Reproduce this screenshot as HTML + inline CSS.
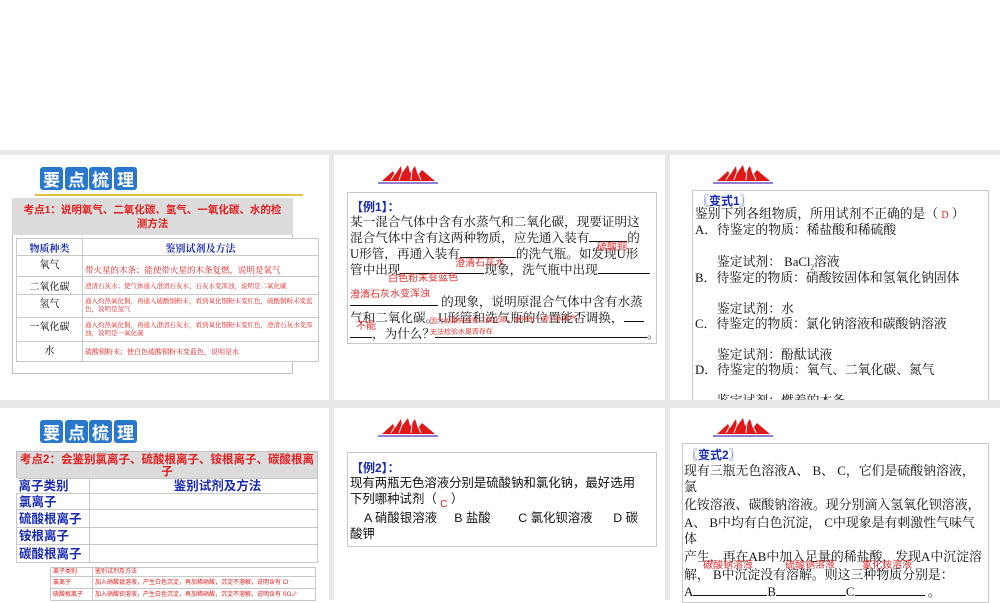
<!DOCTYPE html>
<html><head><meta charset="utf-8">
<style>
*{margin:0;padding:0;box-sizing:border-box}
body{width:1000px;height:600px;position:relative;background:#fff;overflow:hidden;font-family:"Liberation Serif","Noto Serif CJK SC",serif}
.a{position:absolute}
.gray{left:0;top:150px;width:1000px;height:450px;background:#e8e8e8}
.slide{background:#fff}
.blk{position:absolute;width:23px;height:23px;background:#2a78cc;border-radius:3px;color:#fff;font:bold 17px/23px "Noto Sans CJK SC",sans-serif;text-align:center}
.sans{font-family:"Liberation Sans","Noto Sans CJK SC",sans-serif}
.box{border:1px solid #c8c8c8;background:#fff}
.t{font-size:12.6px;line-height:16px;color:#111;white-space:nowrap}
.red{color:#e02020}
.blue{color:#1a2bb0}
table{border-collapse:collapse;position:absolute}
td{border:1px solid #c8c8c8;padding:0 2px}
.ul{display:inline-block;border-bottom:1px solid #111;height:12px;vertical-align:baseline}
.hw{font-family:"Liberation Sans","Noto Sans CJK SC",sans-serif;color:#e03030;font-size:10px;position:absolute;white-space:nowrap;transform:rotate(-1deg)}
</style></head><body>
<div class="a gray"></div>
<div class="a slide" style="left:0;top:155px;width:329px;height:245px"></div>
<div class="a slide" style="left:334px;top:155px;width:331px;height:245px"></div>
<div class="a slide" style="left:670px;top:155px;width:330px;height:245px"></div>
<div class="a slide" style="left:0;top:408px;width:329px;height:192px"></div>
<div class="a slide" style="left:334px;top:408px;width:331px;height:192px"></div>
<div class="a slide" style="left:670px;top:408px;width:330px;height:192px"></div>

<!-- slide 1 -->
<div class="blk" style="left:40px;top:167px">要</div>
<div class="blk" style="left:65px;top:167px">点</div>
<div class="blk" style="left:89px;top:167px">梳</div>
<div class="blk" style="left:114px;top:167px">理</div>
<div class="a" style="left:35px;top:194px;width:268px;height:2px;background:#e8c040"></div>
<div class="a" style="left:12px;top:198px;width:281px;height:176px;border:1px solid #c0c0c0"></div>
<div class="a sans" style="left:12px;top:198px;width:281px;height:37px;background:#dcdcdc;color:#e02020;font-weight:bold;font-size:10.5px;line-height:14px;text-align:center;padding-top:5px;white-space:nowrap">考点1：说明氧气、二氧化碳、氢气、一氧化碳、水的检<br>测方法</div>
<table style="left:16px;top:238px;width:303px;background:#fff;font-size:10px">
<tr style="height:17px"><td style="width:66px;text-align:center;color:#1a2bb0;font-weight:bold">物质种类</td><td style="text-align:center;color:#1a2bb0;font-weight:bold">鉴别试剂及方法</td></tr>
<tr style="height:21px"><td style="text-align:center;vertical-align:top">氧气</td><td class="red" style="font-size:8.5px;vertical-align:bottom">带火星的木条；能使带火星的木条复燃，说明是氧气</td></tr>
<tr style="height:18px"><td style="text-align:center">二氧化碳</td><td class="red" style="font-size:6.5px">澄清石灰水；使气体通入澄清石灰水，石灰水变浑浊，说明是二氧化碳</td></tr>
<tr style="height:23px"><td style="text-align:center;vertical-align:top">氢气</td><td class="red" style="font-size:6.5px;line-height:8px">通入灼热氧化铜，再通入硫酸铜粉末，看到氧化铜粉末变红色，硫酸铜粉末变蓝色，说明是氢气</td></tr>
<tr style="height:24px"><td style="text-align:center;vertical-align:top">一氧化碳</td><td class="red" style="font-size:6.5px;line-height:8px">通入灼热氧化铜，再通入澄清石灰水，看到氧化铜粉末变红色，澄清石灰水变浑浊，说明是一氧化碳</td></tr>
<tr style="height:20px"><td style="text-align:center;vertical-align:top">水</td><td class="red" style="font-size:7px">硫酸铜粉末；使白色硫酸铜粉末变蓝色，说明是水</td></tr>
</table>

<!-- logos -->
<svg class="a" style="left:377px;top:163px" width="62" height="22" viewBox="0 0 62 22"><path d="M5 18 L16 8 L18 12 L24 3 L25 10 L31 2 L33 10 L38 3 L41 12 L45 7 L58 18 Z" fill="#e01818"/><path d="M14 17 L18 10 M22 17 L26 6 M34 17 L35 6 M44 17 L40 8" stroke="#fff" stroke-width="1"/><line x1="1" y1="20" x2="61" y2="20" stroke="#5030b0" stroke-width="1.3"/></svg>
<svg class="a" style="left:712px;top:163px" width="62" height="22" viewBox="0 0 62 22"><path d="M5 18 L16 8 L18 12 L24 3 L25 10 L31 2 L33 10 L38 3 L41 12 L45 7 L58 18 Z" fill="#e01818"/><path d="M14 17 L18 10 M22 17 L26 6 M34 17 L35 6 M44 17 L40 8" stroke="#fff" stroke-width="1"/><line x1="1" y1="20" x2="61" y2="20" stroke="#5030b0" stroke-width="1.3"/></svg>
<svg class="a" style="left:377px;top:416px" width="62" height="22" viewBox="0 0 62 22"><path d="M5 18 L16 8 L18 12 L24 3 L25 10 L31 2 L33 10 L38 3 L41 12 L45 7 L58 18 Z" fill="#e01818"/><path d="M14 17 L18 10 M22 17 L26 6 M34 17 L35 6 M44 17 L40 8" stroke="#fff" stroke-width="1"/><line x1="1" y1="20" x2="61" y2="20" stroke="#5030b0" stroke-width="1.3"/></svg>
<svg class="a" style="left:712px;top:416px" width="62" height="22" viewBox="0 0 62 22"><path d="M5 18 L16 8 L18 12 L24 3 L25 10 L31 2 L33 10 L38 3 L41 12 L45 7 L58 18 Z" fill="#e01818"/><path d="M14 17 L18 10 M22 17 L26 6 M34 17 L35 6 M44 17 L40 8" stroke="#fff" stroke-width="1"/><line x1="1" y1="20" x2="61" y2="20" stroke="#5030b0" stroke-width="1.3"/></svg>

<!-- slide 2 -->
<div class="a box" style="left:347px;top:192px;width:310px;height:152px"></div>
<div class="a sans blue" style="left:351px;top:198px;font-weight:bold;font-size:12px">【例1】：</div>
<div class="a t" style="left:350px;top:214px">某一混合气体中含有水蒸气和二氧化碳，现要证明这</div>
<div class="a t" style="left:350px;top:230px">混合气体中含有这两种物质，应先通入装有<span class="ul" style="width:38px"></span>的</div>
<div class="a t" style="left:350px;top:246px">U形管，再通入装有<span class="ul" style="width:56px"></span>的洗气瓶。如发现U形</div>
<div class="a t" style="left:350px;top:262px">管中出现<span class="ul" style="width:84px"></span>现象，洗气瓶中出现<span class="ul" style="width:52px"></span></div>
<div class="a t" style="left:350px;top:294px"><span class="ul" style="width:88px"></span> 的现象，说明原混合气体中含有水蒸</div>
<div class="a t" style="left:350px;top:310px">气和二氧化碳。U形管和洗气瓶的位置能否调换，<span class="ul" style="width:20px"></span></div>
<div class="a t" style="left:350px;top:326px"><span class="ul" style="width:22px"></span>，为什么？<span class="ul" style="width:212px"></span>。</div>
<div class="hw" style="left:597px;top:238px">硫酸铜</div>
<div class="hw" style="left:455px;top:254px">澄清石灰水</div>
<div class="hw" style="left:388px;top:269px">白色粉末变蓝色</div>
<div class="hw" style="left:350px;top:285px">澄清石灰水变浑浊</div>
<div class="hw" style="left:356px;top:317px">不能</div>
<div class="hw" style="left:430px;top:315px;font-size:7px">因为如果先检验二氧化碳，会带出一部分水蒸气，</div>
<div class="hw" style="left:430px;top:327px;font-size:7px">无法检验水是否存在</div>

<!-- slide 3 -->
<div class="a box" style="left:692px;top:190px;width:297px;height:215px"></div>
<div class="a sans blue" style="left:697px;top:192px;font-weight:bold;font-size:12px">〖变式1〗</div>
<div class="a t" style="left:695px;top:206px;font-size:12.8px">鉴别下列各组物质，所用试剂不正确的是（ <span class="red" style="font-size:10px">D</span> ）</div>
<div class="a t" style="left:695px;top:222px;font-size:12.8px">A．待鉴定的物质：稀盐酸和稀硫酸</div>
<div class="a t" style="left:717px;top:254px;font-size:12.8px">鉴定试剂： BaCl<sub style="font-size:7px">2</sub>溶液</div>
<div class="a t" style="left:695px;top:270px;font-size:12.8px">B．待鉴定的物质：硝酸铵固体和氢氧化钠固体</div>
<div class="a t" style="left:717px;top:301px;font-size:12.8px">鉴定试剂：水</div>
<div class="a t" style="left:695px;top:316px;font-size:12.8px">C．待鉴定的物质：氯化钠溶液和碳酸钠溶液</div>
<div class="a t" style="left:717px;top:347px;font-size:12.8px">鉴定试剂：酚酞试液</div>
<div class="a t" style="left:695px;top:362px;font-size:12.8px">D．待鉴定的物质：氧气、二氧化碳、氮气</div>
<div class="a t" style="left:717px;top:393px;font-size:12.8px">鉴定试剂：燃着的木条</div>
<div class="a" style="left:0;top:400px;width:1000px;height:8px;background:#e8e8e8"></div>
<div class="a" style="left:329px;top:400px;width:5px;height:200px;background:#e8e8e8"></div>
<div class="a" style="left:665px;top:400px;width:5px;height:200px;background:#e8e8e8"></div>

<!-- row2 slide1 -->
<div class="blk" style="left:40px;top:420px">要</div>
<div class="blk" style="left:65px;top:420px">点</div>
<div class="blk" style="left:89px;top:420px">梳</div>
<div class="blk" style="left:114px;top:420px">理</div>
<div class="a sans" style="left:16px;top:451px;width:302px;height:28px;background:#dcdcdc;border:1px solid #c0c0c0;color:#e02020;font-weight:bold;font-size:11.5px;line-height:12px;text-align:center;padding-top:2px;white-space:nowrap">考点2：会鉴别氯离子、硫酸根离子、铵根离子、碳酸根离<br>子</div>
<table class="sans" style="left:16px;top:478px;width:302px;background:#fff;color:#1a2bb0;font-weight:bold;font-size:12.5px;line-height:14px">
<tr style="height:15px"><td style="width:73px;border-left:none">离子类别</td><td style="text-align:center;padding-left:30px">鉴别试剂及方法</td></tr>
<tr style="height:16px"><td>氯离子</td><td></td></tr>
<tr style="height:18px"><td>硫酸根离子</td><td></td></tr>
<tr style="height:17px"><td>铵根离子</td><td></td></tr>
<tr style="height:18px"><td>碳酸根离子</td><td></td></tr>
</table>
<table class="sans red" style="left:50px;top:567px;width:266px;background:#fff;font-size:6px;line-height:8px">
<tr style="height:9px"><td style="width:42px">离子类别</td><td>鉴别试剂及方法</td></tr>
<tr style="height:12px"><td>氯离子</td><td>加入硝酸银溶液，产生白色沉淀，再加稀硝酸，沉淀不溶解，说明含有 Cl⁻</td></tr>
<tr style="height:12px"><td>硫酸根离子</td><td>加入硝酸钡溶液，产生白色沉淀，再加稀硝酸，沉淀不溶解，说明含有 SO₄²⁻</td></tr>
</table>

<!-- row2 slide2 -->
<div class="a box" style="left:347px;top:452px;width:310px;height:95px"></div>
<div class="a sans blue" style="left:351px;top:459px;font-weight:bold;font-size:12px">【例2】：</div>
<div class="a t sans" style="left:350px;top:475px;font-size:12.4px">现有两瓶无色溶液分别是硫酸钠和氯化钠，最好选用</div>
<div class="a t sans" style="left:350px;top:491px;font-size:12.4px">下列哪种试剂（ <span class="red" style="font-size:10px;position:relative;top:4px">C</span> ）</div>
<div class="a t sans" style="left:364px;top:510px;font-size:12.4px">A 硝酸银溶液&nbsp;&nbsp;&nbsp;&nbsp; B 盐酸&nbsp;&nbsp;&nbsp;&nbsp;&nbsp;&nbsp;&nbsp; C 氯化钡溶液&nbsp;&nbsp;&nbsp;&nbsp;&nbsp; D 碳</div>
<div class="a t sans" style="left:350px;top:526px;font-size:12.4px">酸钾</div>

<!-- row2 slide3 -->
<div class="a box" style="left:682px;top:443px;width:307px;height:160px"></div>
<div class="a sans blue" style="left:686px;top:446px;font-weight:bold;font-size:12px">〖变式2〗</div>
<div class="a t" style="left:684px;top:463px;font-size:12.9px">现有三瓶无色溶液A、 B、 C，它们是硫酸钠溶液，</div>
<div class="a t" style="left:684px;top:479px;font-size:12.9px">氯</div>
<div class="a t" style="left:684px;top:497px;font-size:12.9px">化铵溶液、碳酸钠溶液。现分别滴入氢氧化钡溶液，</div>
<div class="a t" style="left:684px;top:515px;font-size:12.9px">A、 B中均有白色沉淀， C中现象是有刺激性气味气</div>
<div class="a t" style="left:684px;top:531px;font-size:12.9px">体</div>
<div class="a t" style="left:684px;top:549px;font-size:12.9px">产生，再在AB中加入足量的稀盐酸，发现A中沉淀溶</div>
<div class="a t" style="left:684px;top:567px;font-size:12.9px">解， B中沉淀没有溶解。则这三种物质分别是：</div>
<div class="a t" style="left:684px;top:584px;font-size:12.9px">A<span class="ul" style="width:74px"></span>B<span class="ul" style="width:70px"></span>C<span class="ul" style="width:70px"></span> 。</div>
<div class="hw" style="left:703px;top:556px">碳酸钠溶液</div>
<div class="hw" style="left:785px;top:556px">硫酸钠溶液</div>
<div class="hw" style="left:862px;top:556px">氯化铵溶液</div>
</body></html>
